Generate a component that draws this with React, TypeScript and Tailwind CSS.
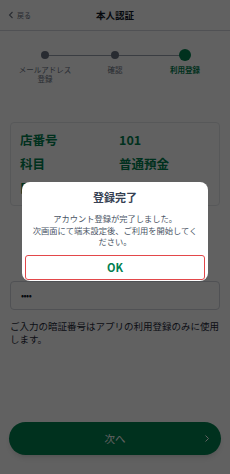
import React from 'react';

const GREEN = '#00804f';

const steps = [
  { label: 'メールアドレス\n登録', active: false },
  { label: '確認', active: false },
  { label: '利用登録', active: true },
];

const rows = [
  { label: '店番号', value: '101' },
  { label: '科目', value: '普通預金' },
  { label: '口座番号', value: '1234567' },
];

const App: React.FC = () => {
  return (
    <div
      className="relative w-[230px] h-[474px] overflow-hidden bg-white"
      style={{ fontFamily: '"Noto Sans CJK JP", "Noto Sans", sans-serif' }}
    >
      {/* Header */}
      <header className="relative flex h-[31px] items-center justify-center border-b border-gray-300">
        <button className="absolute left-[8px] top-0 flex h-full items-center gap-[3px] text-[7px] text-gray-500">
          <svg width="6" height="8" viewBox="0 0 6 8" fill="none">
            <path d="M4.5 1 L1.5 4 L4.5 7" stroke="currentColor" strokeWidth="1.1" />
          </svg>
          <span>戻る</span>
        </button>
        <h1 className="text-[9.5px] font-bold text-gray-900">本人認証</h1>
      </header>

      {/* Stepper */}
      <div className="relative mt-[18px] grid grid-cols-3 px-[10px]">
        <div className="absolute left-[45px] right-[45px] top-[6px] h-px bg-gray-400" />
        {steps.map((s) => (
          <div key={s.label} className="relative flex flex-col items-center">
            <div className="flex h-[12px] items-center justify-center">
              {s.active ? (
                <span className="h-[12px] w-[12px] rounded-full" style={{ backgroundColor: GREEN }} />
              ) : (
                <span className="h-[8.5px] w-[8.5px] rounded-full bg-gray-500" />
              )}
            </div>
            <span
              className={`mt-[4px] whitespace-pre text-center text-[7.5px] leading-[9px] ${
                s.active ? 'font-bold text-[#00804f]' : 'text-gray-500'
              }`}
            >
              {s.label}
            </span>
          </div>
        ))}
      </div>

      {/* Account card */}
      <div className="mx-[10px] mt-[39px] flex h-[84px] flex-col justify-center gap-[10px] rounded-[4px] border border-gray-200 px-[9px]">
        {rows.map((r) => (
          <div key={r.label} className="flex items-center text-[12.5px] font-bold leading-[14px] text-[#00804f]">
            <span className="w-[99px]">{r.label}</span>
            <span>{r.value}</span>
          </div>
        ))}
      </div>

      {/* PIN input */}
      <div className="mx-[10px] mt-[75px] flex h-[29px] items-center rounded-[4px] border border-gray-300 px-[10px]">
        <span className="text-[9px] leading-none tracking-[-0.5px] text-gray-900">••••</span>
      </div>

      <p className="mx-[10px] mt-[10px] text-[9.5px] leading-[13px] text-gray-800">
        ご入力の暗証番号はアプリの利用登録のみに使用します。
      </p>

      {/* Next button */}
      <button
        className="absolute bottom-[19px] left-[9px] right-[9px] flex h-[33px] items-center justify-center rounded-full shadow-md"
        style={{ backgroundColor: GREEN }}
      >
        <span className="text-[10.5px] text-white">次へ</span>
        <svg className="absolute right-[11px]" width="6" height="9" viewBox="0 0 6 9" fill="none">
          <path d="M1.5 1.5 L4.5 4.5 L1.5 7.5" stroke="white" strokeWidth="1" />
        </svg>
      </button>

      {/* Overlay + dialog */}
      <div className="absolute inset-0 bg-black/[0.62]">
        <div className="ml-[22px] mt-[182px] flex w-[186px] flex-col items-center rounded-[8px] bg-white px-[3px] pb-px">
          <h2 className="mt-[8px] text-[11px] font-bold leading-[15px] text-gray-700">登録完了</h2>
          <p className="mt-[8px] px-[5px] text-center text-[8.25px] leading-[11.5px] text-gray-600">
            アカウント登録が完了しました。
            <br />
            次画面にて端末設定後、ご利用を開始してください。
          </p>
          <button className="mt-[7px] flex h-[25px] w-full items-center justify-center rounded-[3px] border-[1.5px] border-[#e3474a] text-[11px] font-bold text-[#00804f]">
            OK
          </button>
        </div>
      </div>
    </div>
  );
};

export default App;
